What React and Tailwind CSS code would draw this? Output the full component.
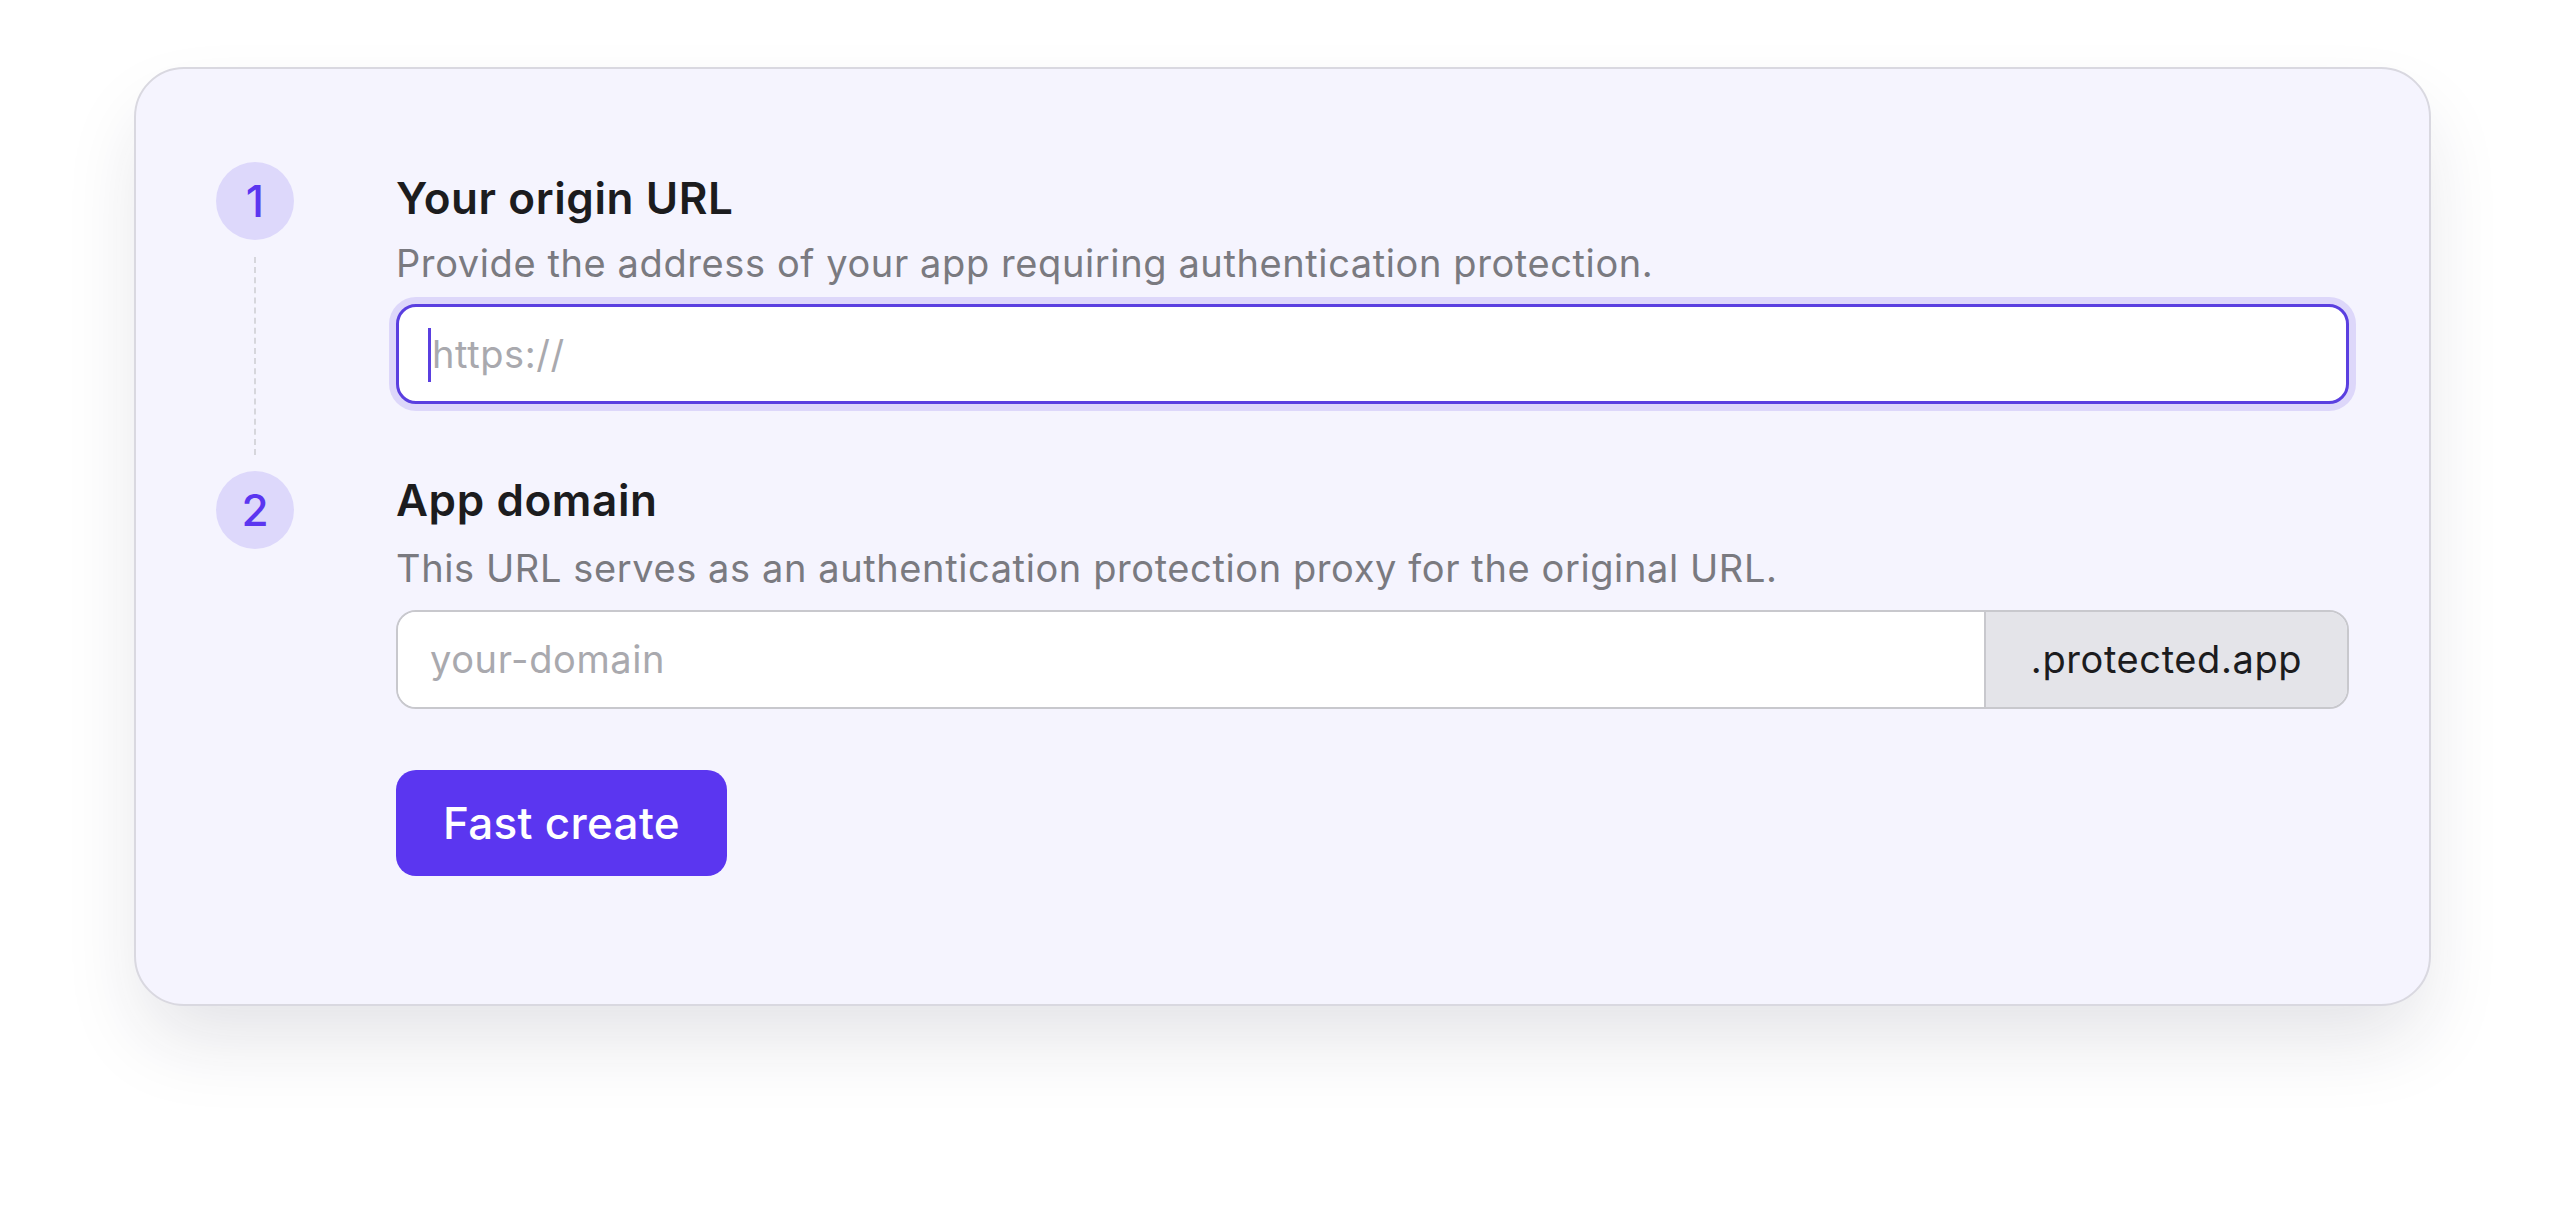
import React from 'react';

const font = { fontFamily: 'Inter, "Noto Sans", sans-serif' };

function StepBadge({ n }) {
  return (
    <div className="w-[78px] h-[78px] shrink-0 rounded-full bg-[#ddd8fb] flex items-center justify-center text-[44px] font-medium text-[#5b36f0]">
      {n}
    </div>
  );
}

export default function App() {
  return (
    <div className="min-h-screen bg-white pt-[67px] pl-[134px] pr-[134px]" style={font}>
      <div className="w-[2297px] h-[939px] bg-[#f5f4fe] border-2 border-[#d9d8e0] rounded-[50px] shadow-[0_40px_80px_-10px_rgba(30,30,60,0.13)] px-[80px] pt-[93px]">
        {/* step 1 */}
        <div className="flex gap-[102px]">
          <div className="flex flex-col items-center w-[78px]">
            <StepBadge n="1" />
            <div className="flex-1 mt-[17px] mb-[16px] border-l-2 border-dashed border-[#d6d6dc]" />
          </div>
          <div className="flex-1 pb-[67px]">
            <h2 className="mt-[12px] text-[44px] leading-[48px] font-semibold text-[#1c1c1e] tracking-[0.6px]">
              Your origin URL
            </h2>
            <p className="mt-[17px] text-[38px] leading-[48px] text-[#7a7a80] tracking-[0.6px]">
              Provide the address of your app requiring authentication protection.
            </p>
            <div className="mt-[17px] relative">
              <input
                readOnly
                placeholder="https://"
                className="w-full h-[100px] rounded-[20px] bg-white border-[3px] border-[#5a3fe0] ring-[7px] ring-[#ddd7fa] outline-none pl-[33px] text-[38px] tracking-[0.6px] text-[#1c1c1e] placeholder:text-[#a9a9ae]"
              />
              <span className="absolute left-[32px] top-[24px] w-[3px] h-[54px] bg-[#5a3fe0]" />
            </div>
          </div>
        </div>

        {/* step 2 */}
        <div className="flex gap-[102px]">
          <div className="w-[78px]">
            <StepBadge n="2" />
          </div>
          <div className="flex-1">
            <h2 className="mt-[5px] text-[44px] leading-[48px] font-semibold text-[#1c1c1e] tracking-[0.6px]">
              App domain
            </h2>
            <p className="mt-[20px] text-[38px] leading-[48px] text-[#7a7a80] tracking-[0.6px]">
              This URL serves as an authentication protection proxy for the original URL.
            </p>
            <div className="mt-[18px] flex h-[99px] rounded-[20px] border-2 border-[#c8c8cd] overflow-hidden">
              <input
                readOnly
                placeholder="your-domain"
                className="flex-1 min-w-0 bg-white outline-none pl-[32px] text-[38px] tracking-[0.6px] text-[#1c1c1e] placeholder:text-[#a9a9ae]"
              />
              <div className="w-[363px] shrink-0 border-l-2 border-[#c8c8cd] bg-[#e4e4e9] flex items-center justify-center text-[38px] tracking-[0.6px] text-[#1c1c1e]">
                .protected.app
              </div>
            </div>
            <button className="mt-[61px] h-[106px] px-[47px] rounded-[20px] bg-[#5b36f0] text-white text-[44px] tracking-[0.3px] font-medium">
              Fast create
            </button>
          </div>
        </div>
      </div>
    </div>
  );
}
